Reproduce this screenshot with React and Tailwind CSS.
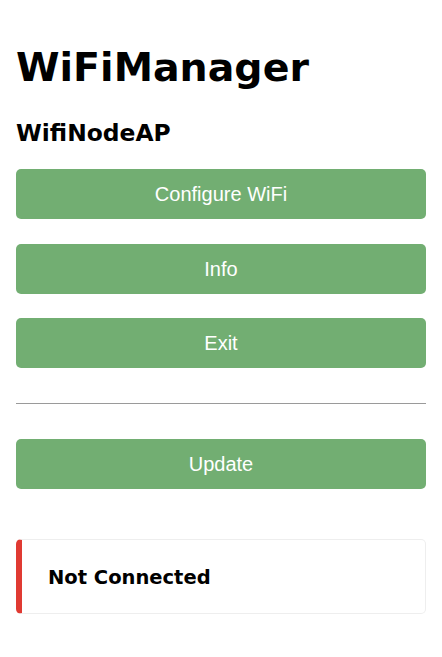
import React from 'react';

const BUTTONS = ['Configure WiFi', 'Info', 'Exit'];

const MenuButton = ({ label, className = '' }) => (
  <button
    className={`w-full h-[50px] rounded-[5px] bg-[#72ae72] text-white text-[20px] leading-[50px] ${className}`}
    style={{ fontFamily: '"Liberation Sans", Arial, sans-serif' }}
  >
    {label}
  </button>
);

const App = () => {
  return (
    <div
      className="min-h-screen bg-white px-4 pt-[44px] text-black"
      style={{ fontFamily: '"DejaVu Sans", Verdana, sans-serif' }}
    >
      <h1 className="text-[39.5px] font-bold leading-[46px]">WiFiManager</h1>
      <h3 className="mt-[30px] text-[23.4px] font-bold leading-[27px]">WifiNodeAP</h3>

      {/* Main menu */}
      <div className="mt-[22px] flex flex-col gap-[24.5px]">
        {BUTTONS.map(label => (
          <MenuButton key={label} label={label} />
        ))}
      </div>

      <hr className="mt-[35px] border-t border-[#9a9a9a]" />

      <MenuButton label="Update" className="mt-[34.5px]" />

      {/* Status message */}
      <div className="mt-[50px] flex h-[75px] items-center rounded-[5px] border border-[#eeeeee] border-l-[6px] border-l-[#e03a32] pl-[26px] pt-[3px]">
        <strong className="text-[19.5px] font-bold">Not Connected</strong>
      </div>
    </div>
  );
};

export default App;
